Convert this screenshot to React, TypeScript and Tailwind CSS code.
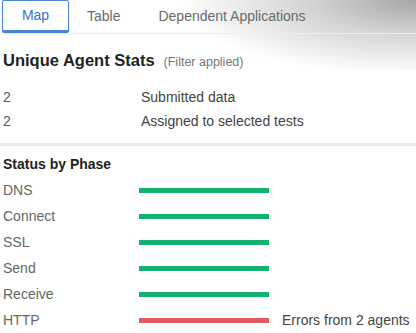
import React from "react";

type Phase = { name: string; ok: boolean; note?: string };

const phases: Phase[] = [
  { name: "DNS", ok: true },
  { name: "Connect", ok: true },
  { name: "SSL", ok: true },
  { name: "Send", ok: true },
  { name: "Receive", ok: true },
  { name: "HTTP", ok: false, note: "Errors from 2 agents" },
];

const stats = [
  { count: 2, label: "Submitted data" },
  { count: 2, label: "Assigned to selected tests" },
];

export default function App() {
  return (
    <div className="relative h-[333px] w-[416px] overflow-hidden bg-white font-['Liberation_Sans',Arial,sans-serif] text-[14px] text-[#555]">
      <div className="bg-[radial-gradient(ellipse_240px_75px_at_100%_0%,#a6a6a6,#d4d4d4_45%,rgba(255,255,255,0)_100%)]">
        <div className="flex h-[34px] items-stretch border-b border-[#eeeeee] pl-[2px]">
          <button className="w-[67px] rounded-[2px] border-[1.5px] border-b-[3px] border-[#4a86d4] bg-white text-[14px] text-[#3a74c4]">
            Map
          </button>
          <button className="ml-[18px] text-[14px] text-[#6b6b6b]">Table</button>
          <button className="ml-[38px] text-[14px] text-[#6b6b6b]">Dependent Applications</button>
        </div>

        <div className="mt-[16px] flex h-[20px] items-baseline gap-[9px] pl-[3px] leading-[20px]">
          <h2 className="text-[16.5px] font-bold text-[#1f1f1f]">Unique Agent Stats</h2>
          <span className="text-[12.5px] text-[#777]">(Filter applied)</span>
        </div>
      </div>

      <div className="mt-[15px] flex flex-col px-[3px]">
        {stats.map((s, i) => (
          <div key={i} className="flex h-[24px] items-center">
            <span className="w-[138px] text-[#5a5a5a]">{s.count}</span>
            <span className="text-[#444]">{s.label}</span>
          </div>
        ))}
      </div>

      <div className="mt-[10px] h-[3px] w-full bg-[#ebebeb]" />

      <h3 className="mt-[8px] h-[20px] pl-[3px] text-[14px] font-bold leading-[20px] text-[#1f1f1f]">
        Status by Phase
      </h3>

      <ul className="mt-[3px] flex flex-col pl-[3px]">
        {phases.map((p) => (
          <li key={p.name} className="flex h-[26px] items-center">
            <span className="w-[136px] text-[#666]">{p.name}</span>
            <span
              className={
                p.ok
                  ? "h-[5px] w-[130px] bg-[#12b26d]"
                  : "h-[5px] w-[130px] bg-[#e05a5e]"
              }
            />
            {p.note && <span className="ml-[13px] text-[#444]">{p.note}</span>}
          </li>
        ))}
      </ul>
    </div>
  );
}
